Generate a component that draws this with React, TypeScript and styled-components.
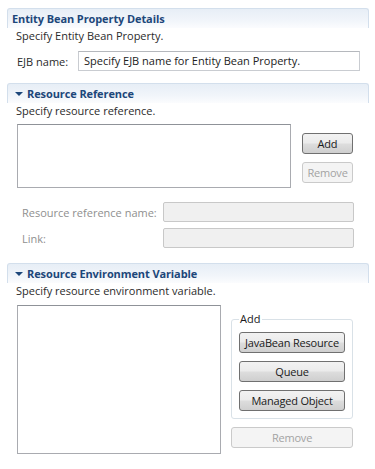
import React from 'react';
import styled, { createGlobalStyle } from 'styled-components';

const GlobalStyle = createGlobalStyle`
  html, body {
    margin: 0;
    padding: 0;
    background: #ffffff;
  }

  body {
    font-family: "Open Sans", "Noto Sans", sans-serif;
    font-size: 11px;
    color: #2b2b2b;
  }
`;

interface ISectionProps {
  title: string;
  collapsible?: boolean;
  top: number;
  children?: React.ReactNode;
}

function Section(props: ISectionProps) {
  return (
    <SectionWrapper top={props.top}>
      <Header>
        {props.collapsible && <Twisty />}
        <Title>{props.title}</Title>
      </Header>
      <Body>{props.children}</Body>
    </SectionWrapper>
  );
}

export default function App() {
  return (
    <Page>
      <GlobalStyle />

      <Section title="Entity Bean Property Details" top={8}>
        <Description>Specify Entity Bean Property.</Description>
        <EjbRow>
          <EjbLabel>EJB name:</EjbLabel>
          <TextField>Specify EJB name for Entity Bean Property.</TextField>
        </EjbRow>
      </Section>

      <Section title="Resource Reference" collapsible top={12}>
        <Description>Specify resource reference.</Description>
        <ListRow>
          <ListBox width={274} height={64} />
          <ButtonColumn>
            <Button>Add</Button>
            <Button disabled>Remove</Button>
          </ButtonColumn>
        </ListRow>
        <FieldGrid>
          <FieldLabel>Resource reference name:</FieldLabel>
          <DisabledField />
          <FieldLabel>Link:</FieldLabel>
          <DisabledField />
        </FieldGrid>
      </Section>

      <Section title="Resource Environment Variable" collapsible top={15}>
        <Description>Specify resource environment variable.</Description>
        <EnvRow>
          <ListBox width={204} height={149} />
          <EnvSide>
            <Group>
              <Legend>Add</Legend>
              <GroupButton>JavaBean Resource</GroupButton>
              <GroupButton>Queue</GroupButton>
              <GroupButton>Managed Object</GroupButton>
            </Group>
            <WideButton disabled>Remove</WideButton>
          </EnvSide>
        </EnvRow>
      </Section>
    </Page>
  );
}

const Page = styled.div`
  width: 375px;
  height: 469px;
  overflow: hidden;
  background: #ffffff;
`;

const SectionWrapper = styled.div<{ top: number }>`
  margin: ${(p) => p.top}px 6px 0 7px;
`;

const Header = styled.div`
  height: 19px;
  display: flex;
  align-items: center;
  gap: 4px;
  padding-left: 4px;
  border: 1px solid #d3dfec;
  border-bottom: none;
  border-radius: 3px 3px 0 0;
  background: linear-gradient(to bottom, #e7eef6 0%, #f1f5fa 60%, #fbfcfe 100%);
`;

const Twisty = styled.span`
  width: 0;
  height: 0;
  margin-left: 3px;
  border-left: 4px solid transparent;
  border-right: 4px solid transparent;
  border-top: 4px solid #1d477a;
`;

const Title = styled.span`
  font-weight: bold;
  font-size: 11px;
  color: #1d477a;
  letter-spacing: -0.1px;
`;

const Body = styled.div`
  padding-left: 9px;
`;

const Description = styled.div`
  line-height: 16px;
`;

const EjbRow = styled.div`
  display: flex;
  align-items: center;
  margin-top: 7px;
`;

const EjbLabel = styled.span`
  width: 61px;
  padding-left: 1px;
`;

const TextField = styled.div`
  width: 275px;
  height: 18px;
  line-height: 18px;
  padding-left: 5px;
  border: 1px solid #c9ccd1;
  border-top-color: #b5b8bd;
  color: #222222;
`;

const ListRow = styled.div`
  display: flex;
  gap: 11px;
  margin-top: 5px;
  padding-left: 1px;
`;

const ListBox = styled.div<{ width: number; height: number }>`
  width: ${(p) => p.width - 2}px;
  height: ${(p) => p.height - 2}px;
  border: 1px solid #a9abb0;
  border-top-color: #8f9298;
  background: #ffffff;
`;

const ButtonColumn = styled.div`
  display: flex;
  flex-direction: column;
  gap: 8px;
  padding-top: 9px;
`;

const Button = styled.button`
  width: 51px;
  height: 21px;
  padding: 0;
  font-family: inherit;
  font-size: 11px;
  letter-spacing: -0.2px;
  color: #1a1a1a;
  border: 1px solid #707070;
  border-radius: 3px;
  background: linear-gradient(to bottom, #f2f2f2 0%, #ebebeb 48%, #dddddd 52%, #cfcfcf 100%);

  &:disabled {
    color: #a3a3a3;
    border-color: #cacaca;
    background: #f4f4f4;
  }
`;

const FieldGrid = styled.div`
  display: grid;
  grid-template-columns: 141px 191px;
  row-gap: 6px;
  align-items: center;
  margin-top: 14px;
  padding-left: 6px;
`;

const FieldLabel = styled.span`
  color: #8f8f8f;
`;

const DisabledField = styled.div`
  height: 18px;
  border: 1px solid #c8c8c8;
  border-radius: 2px;
  background: #f0f0f0;
`;

const EnvRow = styled.div`
  display: flex;
  gap: 10px;
  margin-top: 6px;
  padding-left: 1px;
`;

const EnvSide = styled.div`
  display: flex;
  flex-direction: column;
  gap: 8px;
  padding-top: 7px;
`;

const Group = styled.fieldset`
  width: 122px;
  box-sizing: border-box;
  margin: 0;
  padding: 6px 0 7px 7px;
  display: flex;
  flex-direction: column;
  gap: 8px;
  border: 1px solid #d9e1e7;
  border-radius: 3px;
`;

const Legend = styled.legend`
  padding: 0 2px 0 1px;
  margin-left: 0;
  line-height: 14px;
  color: #1a1a1a;
`;

const GroupButton = styled(Button)`
  width: 106px;
`;

const WideButton = styled(Button)`
  width: 122px;
`;
